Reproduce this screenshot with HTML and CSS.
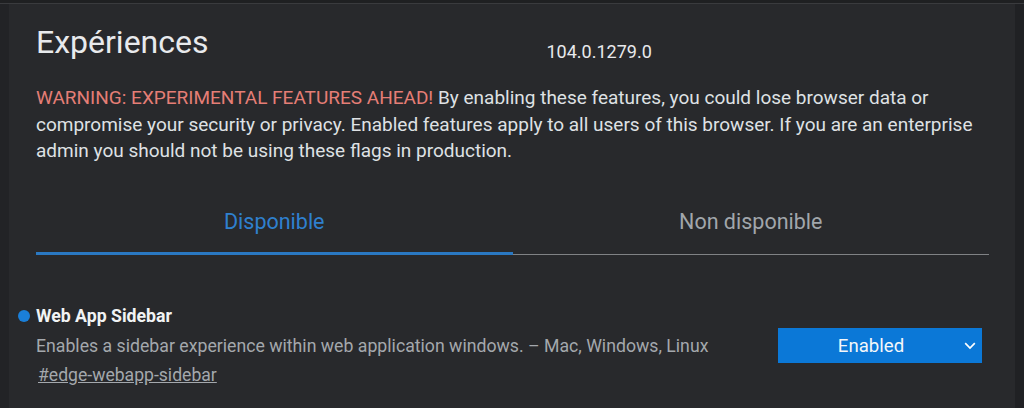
FILE: index.html
```html
<!DOCTYPE html>
<html>
<head>
<meta charset="utf-8">
<link rel="stylesheet" href="styles.css">
</head>
<body>
<div class="topline"></div>
<div class="frame">
  <div class="gutter"></div>
  <main class="panel">
    <header class="head">
      <h1 class="title">Expériences</h1>
      <div class="version">104.0.1279.0</div>
    </header>
    <p class="warning"><span class="warn-red">WARNING: EXPERIMENTAL FEATURES AHEAD!</span> By enabling these features, you could lose browser data or compromise your security or privacy. Enabled features apply to all users of this browser. If you are an enterprise admin you should not be using these flags in production.</p>
    <nav class="tabs">
      <div class="tab active">Disponible</div>
      <div class="tab">Non disponible</div>
    </nav>
    <section class="feature">
      <div class="feature-text">
        <div class="feature-name"><span class="dot"></span>Web App Sidebar</div>
        <div class="feature-desc">Enables a sidebar experience within web application windows. – Mac, Windows, Linux</div>
        <a class="feature-link">#edge-webapp-sidebar</a>
      </div>
      <div class="select">
        <span>Enabled</span>
        <svg class="chev" width="12" height="8" viewBox="0 0 12 8"><path d="M1.2 1.2 L6 6 L10.8 1.2" fill="none" stroke="#fff" stroke-width="1.7"/></svg>
      </div>
    </section>
  </main>
  <div class="gutter-r"></div>
</div>
</body>
</html>
```
FILE: styles.css
```css
html, body {
  margin: 0;
  padding: 0;
  background: #232427;
  font-family: Roboto, "Liberation Sans", sans-serif;
  width: 1024px;
  height: 408px;
  overflow: hidden;
}
.topline {
  height: 3px;
  background: #1f2022;
  border-bottom: 1px solid #3a3b3e;
}
.frame {
  display: flex;
  height: 404px;
}
.gutter {
  flex: 0 0 9px;
  background: #222326;
}
.gutter-r {
  flex: 0 0 9px;
  background: #202124;
}
.panel {
  flex: 1;
  min-width: 0;
  background: #28292c;
  padding: 0 0 0 27px;
  box-sizing: border-box;
}
.head {
  display: flex;
  align-items: flex-start;
  height: 64px;
}
.title {
  margin: 0;
  font-size: 32px;
  font-weight: 400;
  color: #e8eaed;
  line-height: 32px;
  padding-top: 22px;
}
.version {
  margin-left: 338px;
  margin-top: 37px;
  font-size: 18px;
  line-height: 21px;
  color: #e8eaed;
}
.warning {
  margin: 17px 0 0 0;
  font-size: 19px;
  line-height: 26.5px;
  color: #dfe1e4;
  width: 965px;
}
.warn-red {
  color: #e57e76;
}
.tabs {
  display: flex;
  margin-top: 44px;
  width: 953px;
}
.tab {
  flex: 1;
  text-align: center;
  font-size: 21.5px;
  line-height: 25px;
  color: #a1a6ab;
  padding-bottom: 20.5px;
  border-bottom: 1px solid #808285;
}
.tab.active {
  color: #2f80cf;
  border-bottom: 3px solid #2a78c2;
  padding-bottom: 18.5px;
}
.feature {
  display: flex;
  align-items: flex-start;
  margin-top: 50px;
  width: 946px;
}
.feature-text {
  flex: 1;
}
.feature-name {
  position: relative;
  font-size: 17.7px;
  font-weight: 700;
  color: #f1f3f4;
  line-height: 22px;
}
.dot {
  position: absolute;
  left: -18px;
  top: 5px;
  width: 12px;
  height: 12px;
  border-radius: 50%;
  background: #1a7fd9;
}
.feature-desc {
  margin-top: 8px;
  font-size: 17.7px;
  color: #a4a8ad;
  line-height: 22px;
}
.feature-link {
  display: inline-block;
  margin-top: 7px;
  margin-left: 2px;
  font-size: 17.6px;
  color: #a4a8ad;
  text-decoration: underline;
  line-height: 22px;
}
.select {
  margin-top: 23px;
  flex: 0 0 204px;
  height: 35px;
  background: #0b78d7;
  display: flex;
  align-items: center;
  justify-content: center;
  position: relative;
  color: #f4f7fa;
  font-size: 18.6px;
}
.select span {
  margin-right: 18px;
}
.chev {
  position: absolute;
  right: 6px;
  top: 14px;
}
```
